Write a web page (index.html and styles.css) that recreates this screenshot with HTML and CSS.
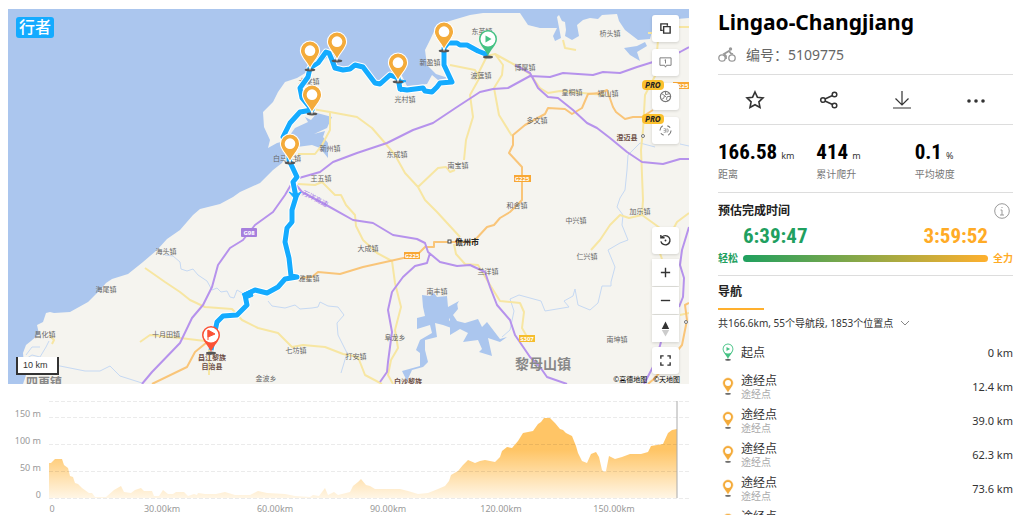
FILE: index.html
```
<!DOCTYPE html>
<html lang="zh-CN">
<head>
  <meta charset="UTF-8">
  <meta name="viewport" content="width=device-width, initial-scale=1">
  <title>Lingao-Changjiang - 行者</title>
  <link rel="stylesheet" href="styles.css">
</head>
<body>

  <!-- 公用图标 -->
  <svg class="defs" width="0" height="0" aria-hidden="true">
    <symbol id="pin" viewBox="0 0 20 30">
      <ellipse cx="10" cy="28" rx="5" ry="1.5" fill="#555"/>
      <path d="M10 27 C8 21 1 16 1 10 A9 9 0 0 1 19 10 C19 16 12 21 10 27Z" fill="#f4ab3a" stroke="#fff" stroke-width="1"/>
      <circle cx="10" cy="10" r="5" fill="#fff"/>
    </symbol>
    <symbol id="pin-start" viewBox="0 0 20 30">
      <ellipse cx="10" cy="28" rx="5" ry="1.5" fill="#555"/>
      <path d="M10 27 C8 21 1 16 1 10 A9 9 0 0 1 19 10 C19 16 12 21 10 27Z" fill="#45c284"/>
      <circle cx="10" cy="10" r="7.5" fill="#fff"/>
      <path d="M7.5 6.5v7l6-3.500z" fill="#45c284"/>
    </symbol>
    <symbol id="pin-end" viewBox="0 0 20 30">
      <ellipse cx="10" cy="28" rx="5" ry="1.5" fill="#555"/>
      <path d="M10 27 C8 21 1 16 1 10 A9 9 0 0 1 19 10 C19 16 12 21 10 27Z" fill="#fb5236"/>
      <circle cx="10" cy="10" r="7.5" fill="#fff"/>
      <path d="M7 5v10M7 5l7 4-7 3z" fill="#fb5236" stroke="#fb5236"/>
    </symbol>
  </svg>

  <div class="page">
    <main class="left">
      <div class="map">
        <svg class="map-canvas" viewBox="8 9 681 375" role="img" aria-label="路线地图">
          <rect class="sea" x="8" y="9" width="681" height="375"/>
          <path class="land" d="M23 384 L26 375 24 365 23 353 26 345 31 341 39 334 37 325 43 322 46 313 50 312 54 313 70 312 88 302 100 290 106 283 112 279 128 274 143 262 157 250 167 239 180 230 193 215 200 209 220 204 233 197 240 192 260 183 273 170 282 163 286 156 281 142 277 143 268 148 270 140 264 127 263 112 273 102 278 92 285 82 297 78 307 72 318 65 328 57 337 62 333 66 347 68 362 65 373 83 382 82 388 73 400 72 407 86 427 84 432 75 438 80 448 78 436 74 427 65 425 50 430 40 437 25 453 20 470 15 483 13 520 13 528 25 540 28 557 28 553 36 555 41 561 38 557 17 559 15 562 21 565 22 566 30 565 36 572 40 579 36 577 25 583 20 590 18 598 19 602 15 617 14 619 21 625 30 638 40 650 39 653 27 664 20 689 18 V384Z"/>
          <!-- 海湾和水库 -->
          <path class="sea" d="M305 117 L311 120 317 113 332 117 327 128 314 134 325 131 323 137 328 143 328 158 320 148 312 145 297 147 283 146 290 135 295 128 308 122Z"/>
          <path class="sea" d="M624 48 L637 46 645 42 647 46 637 52 640 61 630 55Z"/>
          <path class="sea" d="M422 295 L430 296 434 293 437 297 447 296 448 307 459 301 452 313 449 320 457 330 443 325 435 323 437 337 425 340 425 350 428 362 423 367 412 370 407 381 402 371 420 366 420 353 416 350 420 340 432 333 430 325 417 329 417 318 425 316 423 307Z"/>
          <path class="sea" d="M450 313 L457 303 458 309 453 315 457 321 465 323 478 319 482 327 487 322 500 339 507 337 500 342 488 338 492 356 479 352 482 349 478 340 463 342 468 333 460 329 450 335Z"/>
          <path class="river" d="M24 360 l8 -5 8 2 6 -10 3 -6 M26 355 l6 -8 8 0 M165 255 L173 256 180 262 181 269 187 271 193 269 198 275 207 281 212 290 217 288 221 292 227 291 230 297 234 298 237 290 244 294 M268 301 L272 306 285 308 295 305 300 309 312 308 318 307 320 302 328 306 338 307 344 315 337 323 338 335 347 353 341 373 M55 365 L85 371 100 371 110 366 120 376 142 383 M689 146 L680 144 M655 147 L640 143 628 155 627 170 625 190 620 198 617 207 623 215 622 225 628 240 620 243 608 250 615 267 611 282 611 286 602 286 598 303 590 310 578 305 575 289 573 296 564 301 569 307 545 311 541 301 530 298 519 295 510 299 514 311 510 330 502 337"/>
          <!-- 道路 -->
          <path class="road yellow" d="M312 109 L330 112 357 117 372 128 385 143 395 155 405 173 418 187 425 200 437 212 460 237 M454 244 L456 254 465 264 478 265 490 285 500 301 520 303 524 312 522 328 530 342 M330 112 L330 130 322 145 315 154 298 154 M298 184 L315 185 322 182 335 195 341 195 346 205 355 215 356 226 363 240 377 253 392 261 395 283 401 307 395 330 398 348 391 360 388 375 393 384 M450 65 L475 70 480 77 470 95 473 117 466 140 464 160 M455 170 L450 172 446 167 438 168 418 187 M487 56 L495 54 503 65 502 75 494 88 499 115 512 136 M475 80 L487 56 M495 54 L515 65 530 74 540 88 548 93 560 91 605 95 M145 268 L165 282 180 292 190 300 205 307 232 309 242 320 258 328 278 333 292 347 303 345 325 347 343 354 358 357 365 375 382 384 M140 342 L150 335 180 338 205 341 M658 40 L655 76 645 95 643 130 641 150 643 200 642 215 629 218 620 215 610 225 600 240 591 250 M642 215 L660 228 657 245 662 259 M689 213 L677 222 670 235 M563 40 L565 48 576 50 M50 336 l4 4 -2 4 M209 345 v30 M680 315 l9 -2 M648 33 h12 l10 -6 h19"/>
          <path class="road orange" d="M653 110 L642 117 633 117 625 119 616 112 613 107 607 90 600 93 588 94 582 108 572 114 565 109 548 108 545 114 525 125 513 135 513 145 509 153 522 167 522 200 510 212 500 218 494 225 487 227 475 240 M475 242 H434 v5 H425 L417 255 390 261 363 267 340 274 318 272 312 277 298 278 M152 384 L187 367 195 352 206 343 M689 303 L685 305 687 320 682 345 655 378 648 384"/>
          <path class="road purple" d="M292 180 L320 172 333 162 357 153 387 143 413 130 433 123 457 107 480 92 493 89 508 88 530 76 550 77 563 73 593 75 603 72 620 73 637 67 653 62 680 52 689 47 M515 65 L530 73 538 88 548 97 558 98 573 110 587 123 597 128 610 138 627 152 642 162 663 164 680 159 689 159 M142 384 L152 372 180 343 192 318 203 305 212 287 218 265 230 248 243 240 255 225 273 212 285 195 292 183 M292 180 L302 192 328 206 353 220 373 223 393 235 417 239 425 243 428 252 440 262 457 266 470 265 485 272 490 287 497 305 510 320 515 335 530 357 540 367 547 377 567 384 M430 253 L427 263 415 266 403 277 392 292 388 310 392 332 388 362 387 372 380 382 M689 227 L682 250 680 265 684 278 683 297 679 307 M661 342 L655 363 644 384"/>

          <text class="town" x="482" y="34">东英镇</text>
          <text class="town" x="430" y="65">新盈镇</text>
          <text class="town" x="405" y="102">光村镇</text>
          <text class="town" x="481" y="78">波莲镇</text>
          <text class="town" x="525" y="70">博厚镇</text>
          <text class="town" x="610" y="36">桥头镇</text>
          <text class="town" x="572" y="95">皇桐镇</text>
          <text class="town" x="608" y="96">福山镇</text>
          <text class="town" x="537" y="123">多文镇</text>
          <text class="town" x="309" y="84">木棠镇</text>
          <text class="town" x="330" y="151">新州镇</text>
          <text class="town" x="287" y="161">白马井镇</text>
          <text class="town" x="321" y="181">王五镇</text>
          <text class="town" x="397" y="157">东成镇</text>
          <text class="town" x="458" y="168">南宝镇</text>
          <text class="town" x="517" y="208">和舍镇</text>
          <text class="town" x="576" y="223">中兴镇</text>
          <text class="town" x="640" y="214">加乐镇</text>
          <text class="town" x="587" y="259">仁兴镇</text>
          <text class="town" x="488" y="274">兰洋镇</text>
          <text class="town" x="437" y="294">南丰镇</text>
          <text class="town" x="617" y="342">南坤镇</text>
          <text class="town" x="368" y="251">大成镇</text>
          <text class="town" x="309" y="281">雅星镇</text>
          <text class="town" x="395" y="340">阜龙乡</text>
          <text class="town" x="296" y="353">七坊镇</text>
          <text class="town" x="356" y="359">打安镇</text>
          <text class="town" x="266" y="381">金波乡</text>
          <text class="town" x="166" y="254">海头镇</text>
          <text class="town" x="106" y="292">海尾镇</text>
          <text class="town" x="45" y="337">昌化镇</text>
          <text class="town" x="166" y="337">十月田镇</text>
          <text class="county" x="627" y="140">澄迈县</text>
          <text class="county" x="408" y="384">白沙黎族</text>
          <text class="county" x="212" y="360">昌江黎族</text>
          <text class="county" x="212" y="369">自治县</text>
          <text class="city" x="467" y="245">儋州市</text>
          <text class="big-town" x="543" y="369">黎母山镇</text>
          <text class="big-town small" x="44" y="387">四更镇</text>
          <text class="expressway" x="315" y="201" transform="rotate(27 315 199)">万洋高速</text>
          <rect x="448" y="240" width="3" height="3" fill="#fff" stroke="#444"/>
          <circle cx="643" cy="136" r="1.5" fill="#fff" stroke="#777"/>
          <circle cx="686" cy="322" r="1.5" fill="#fff" stroke="#777"/>

          <rect class="shield-purple" x="241" y="228" width="16" height="9" rx="1"/>
          <text class="shield" x="249" y="235">G98</text>
          <rect class="shield-orange" x="404" y="252" width="16" height="7"/>
          <text class="shield" x="412" y="258">G225</text>
          <rect class="shield-orange" x="514" y="175" width="17" height="7"/>
          <text class="shield" x="522" y="181">G225</text>
          <rect class="shield-orange" x="673" y="82" width="16" height="7"/>
          <text class="shield" x="681" y="88">G225</text>
          <rect class="shield-yellow" x="519" y="335" width="16" height="7"/>
          <text class="shield" x="527" y="341">S307</text>

          <!-- 骑行路线 -->
          <defs>
            <path id="track" d="M488 55 L478 51 467 45 460 45 457 43 448 43 444 48 444 65 452 82 440 83 437 87 432 92 425 91 423 88 407 90 400 89 398 78 390 75 380 84 375 83 363 67 355 65 350 69 343 70 335 68 332 60 329 53 326 52 318 63 310 68 308 77 300 88 302 98 312 110 300 112 290 123 283 137 289 155 289 160 297 177 293 182 296 197 292 210 292 222 287 228 285 242 289 258 291 276 297 277 285 279 278 287 267 293 255 290 245 295 247 305 237 315 223 316 217 322 211 350"/>
          </defs>
          <use href="#track" class="casing"/>
          <use href="#track" class="line"/>
          <path class="arrow" d="M289 192 l6 3 6 -3 -5 8z M242 294 l9 -4 2 6 -7 3z M396 79 l10 2 -6 3 1 8z"/>

          <use href="#pin" x="301" y="84" width="22" height="32"/>
          <use href="#pin" x="279" y="133" width="22" height="32"/>
          <use href="#pin" x="299" y="40" width="22" height="32"/>
          <use href="#pin" x="326" y="31" width="22" height="32"/>
          <use href="#pin" x="387" y="52" width="22" height="32"/>
          <use href="#pin" x="433" y="21" width="22" height="32"/>
          <use href="#pin-start" x="478" y="29" width="20" height="30"/>
          <use href="#pin-end" x="201" y="325" width="20" height="30"/>
        </svg>

        <a class="logo" href="#">行者</a>
        <div class="scale">10 km</div>
        <div class="copyright"><span>©高德地图</span><span>©天地图</span></div>

        <div class="tools tools-top">
          <button aria-label="图层"><svg viewBox="0 0 14 14"><path d="M4 9H2V2h7v2M5 5h7v7H5z" stroke="#333" stroke-width="1.5"/></svg></button>
          <button aria-label="路况"><svg viewBox="0 0 14 14"><path d="M1 2h12v8H8l-1 2-1-2H1zM6 4.500l1-.5v4" stroke="#777"/></svg></button>
          <button aria-label="全景"><span class="pro">PRO</span><svg viewBox="0 0 14 14"><circle cx="7" cy="7" r="5.5" stroke="#777" stroke-width="1.3"/><path d="M3 4l3 2-1 3-2 1M7 2v3l4-1M12 7H9l-1 3 2 2M6 6l2 2" stroke="#777"/></svg></button>
          <button aria-label="3D"><span class="pro">PRO</span><svg viewBox="0 0 14 14"><path d="M1 7a6 6 0 0 1 3-5M5 12a5 5 0 0 1-3-2M9 2a5 5 0 0 1 3 2M13 7a6 6 0 0 1-3 5" stroke="#777" stroke-width="1.2"/><path d="M5 5h2v4H5M5 7h2M8.500 5v4l1.500-1V6z" stroke="#999" stroke-width=".8"/></svg></button>
        </div>
        <div class="tools tools-bottom">
          <button aria-label="复位"><svg viewBox="0 0 14 14"><path d="M3 3.500A5 5 0 1 1 2 8M2 1v3h4" stroke="#333" stroke-width="1.5"/><circle cx="7" cy="7" r="1" fill="#333"/></svg></button>
          <div class="zoom">
            <button aria-label="放大"><svg viewBox="0 0 14 14"><path d="M2 7h10M7 2v10" stroke="#333" stroke-width="1.5"/></svg></button>
            <button aria-label="缩小"><svg viewBox="0 0 14 14"><path d="M2 7h10" stroke="#333" stroke-width="1.5"/></svg></button>
            <button aria-label="指北"><svg viewBox="0 0 14 18"><path d="M7 1l4 8H3z" fill="#333"/><path d="M7 17l4-7H3z" fill="#ccc"/></svg></button>
          </div>
          <button aria-label="全屏"><svg viewBox="0 0 14 14"><path d="M2 5V2h3M9 2h3v3M12 9v3H9M5 12H2V9" stroke="#333" stroke-width="1.5"/></svg></button>
        </div>
      </div>

      <!-- 海拔图 -->
      <svg class="chart" viewBox="8 395 681 120" role="img" aria-label="海拔图">
        <defs>
          <linearGradient id="fill" gradientUnits="userSpaceOnUse" x1="0" y1="418" x2="0" y2="498">
            <stop offset="0" stop-color="#ffc566"/>
            <stop offset="0.4" stop-color="#ffc566"/>
            <stop offset="1" stop-color="#fff6e6"/>
          </linearGradient>
        </defs>
        <path class="profile" fill="url(#fill)" d="M49 498 V463 L51 463 55 459 62 459 64 465 68 468 70 476 73 477 75 483 78 484 82 488 89 493 92 493 95 497 106 497 114 490 121 486 124 492 131 493 135 490 141 488 144 491 152 491 154 496 159 496 163 490 168 494 173 494 176 492 184 492 188 496 194 494 197 495 198 493 205 494 216 494 225 492 235 495 250 495 258 491 267 493 285 494 295 496 310 497 313 495 319 496 325 488 328 495 334 492 338 495 350 492 353 486 358 482 361 479 366 485 370 486 375 489 400 489 408 491 418 494 428 493 438 489 445 486 449 481 451 475 458 471 463 465 468 460 475 463 480 461 485 460 495 462 500 457 502 451 507 447 512 448 518 441 523 433 533 431 538 424 541 422 544 418 550 418 555 423 560 429 563 430 566 433 572 436 576 446 578 453 582 461 587 463 591 454 596 452 599 457 602 470 604 472 606 471 609 456 615 459 622 457 630 454 641 454 648 452 651 446 663 444 668 433 672 430 677 429 V498Z"/>
        <path class="grid" d="M49 401.500H689M49 417.500H689M49 444.500H689M49 471.500H689M49 498.500H689"/>
        <path class="cursor" d="M677 401V498"/>
        <g class="y-axis">
          <text x="41" y="417">150 m</text>
          <text x="41" y="444">100 m</text>
          <text x="41" y="471">50 m</text>
          <text x="41" y="498">0</text>
        </g>
        <g class="x-axis">
          <text x="52" y="512">0</text>
          <text x="162" y="512">30.00km</text>
          <text x="275" y="512">60.00km</text>
          <text x="388" y="512">90.00km</text>
          <text x="501" y="512">120.00km</text>
          <text x="614" y="512">150.00km</text>
        </g>
      </svg>
    </main>

    <aside class="panel">
      <header class="head">
        <h1>Lingao-Changjiang</h1>
        <p class="number">
          <svg viewBox="0 0 18 16" aria-hidden="true"><g fill="none" stroke="#999" stroke-width="1.3"><circle cx="4" cy="11" r="3.2"/><circle cx="14" cy="11" r="3.2"/><path d="M8 12V9L6 7l5-3 2 2.500 2 .5" stroke-width="1.8"/></g><circle cx="12.5" cy="2" r="1.7" fill="#999"/></svg>
          <span>编号：5109775</span>
        </p>
      </header>

      <div class="actions">
        <button aria-label="收藏"><svg viewBox="0 0 20 20"><path d="M10 2l2.400 5.200 5.600.7-4.100 3.900 1.100 5.700-5-2.800-5 2.800 1.100-5.700L2 7.900l5.600-.7z" stroke-width="1.6"/></svg></button>
        <button aria-label="分享"><svg viewBox="0 0 20 20"><g stroke-width="1.5"><circle cx="4" cy="10" r="2.3"/><circle cx="15.5" cy="4.5" r="2.3"/><circle cx="15.5" cy="15.5" r="2.3"/><path d="M6 9l7.500-3.500M6 11l7.500 3.500"/></g></svg></button>
        <button aria-label="下载"><svg viewBox="0 0 20 20"><path d="M10 1v14M3.500 8.500L10 15l6.500-6.500M1 18h18" stroke-width="1.2"/></svg></button>
        <button aria-label="更多"><svg viewBox="0 0 20 20"><g fill="#333" stroke="none"><circle cx="3" cy="11" r="1.8"/><circle cx="10" cy="11" r="1.8"/><circle cx="17" cy="11" r="1.8"/></g></svg></button>
      </div>

      <div class="stats">
        <div><p class="value"><b>166.58</b>km</p><p class="label">距离</p></div>
        <div><p class="value"><b>414</b>m</p><p class="label">累计爬升</p></div>
        <div><p class="value"><b>0.1</b>%</p><p class="label">平均坡度</p></div>
      </div>

      <section class="estimate">
        <div class="estimate-head">
          <h2>预估完成时间</h2>
          <button aria-label="说明"><svg viewBox="0 0 16 16"><circle cx="8" cy="8" r="7.3"/><path d="M6.500 7H8v5M6 12h4M8 4v1"/></svg></button>
        </div>
        <div class="times"><b class="easy">6:39:47</b><b class="hard">3:59:52</b></div>
        <div class="effort"><span class="easy">轻松</span><div class="bar"></div><span class="hard">全力</span></div>
      </section>

      <section class="nav">
        <h2>导航</h2>
        <button class="summary">共166.6km, 55个导航段, 1853个位置点
          <svg viewBox="0 0 10 10"><path d="M1 3l4 4 4-4"/></svg>
        </button>
        <ul class="points">
          <li><svg><use href="#pin-start"/></svg><div><p>起点</p></div><span>0 km</span></li>
          <li><svg><use href="#pin"/></svg><div><p>途经点</p><small>途经点</small></div><span>12.4 km</span></li>
          <li><svg><use href="#pin"/></svg><div><p>途经点</p><small>途经点</small></div><span>39.0 km</span></li>
          <li><svg><use href="#pin"/></svg><div><p>途经点</p><small>途经点</small></div><span>62.3 km</span></li>
          <li><svg><use href="#pin"/></svg><div><p>途经点</p><small>途经点</small></div><span>73.6 km</span></li>
          <li><svg><use href="#pin"/></svg><div><p>途经点</p><small>途经点</small></div></li>
        </ul>
      </section>
    </aside>
  </div>

</body>
</html>
```
FILE: styles.css
```
* {
  box-sizing: border-box;
}

body {
  margin: 0;
  background-color: #fff;
  color: #333;
  font-family: 'Noto Sans', 'Noto Sans CJK SC', sans-serif;
  font-size: 12px;
}

h1, h2, p, ul {
  margin: 0;
  padding: 0;
}

button {
  border: none;
  background: none;
  padding: 0;
  font-family: inherit;
  color: inherit;
  cursor: pointer;
}

svg {
  display: block;
}

.defs {
  position: absolute;
}

.page {
  display: flex;
  gap: 29px;
  height: 100vh;
  padding: 9px 11px 0 8px;
  overflow: hidden;
}

.left {
  flex: 681;
  min-width: 0;
}

.panel {
  flex: 295;
  min-width: 0;
}

/* 地图 */
.map {
  position: relative;
  margin-bottom: 11px;
}

.map-canvas,
.chart {
  width: 100%;
  height: auto;
}

.sea {
  fill: #abc6ee;
}

.land {
  fill: #f5f4ef;
}

.river {
  fill: none;
  stroke: #c6d9f3;
}

.road {
  fill: none;
  stroke-width: 2;
  stroke-linejoin: round;
}

.yellow {
  stroke: #f7e6a2;
}

.orange {
  stroke: #f9c579;
}

.purple {
  stroke: #b692ec;
}

.map-canvas text {
  text-anchor: middle;
}

.town {
  font-size: 7px;
  fill: #666;
}

.county {
  font-size: 7px;
  font-weight: bold;
  fill: #6e5047;
}

.city {
  font-size: 8px;
  font-weight: bold;
  fill: #222;
}

.big-town {
  font-size: 14px;
  font-weight: bold;
  fill: #888;
}

.big-town.small {
  font-size: 12px;
}

.expressway {
  font-size: 7px;
  fill: #a77de8;
}

.shield {
  font-size: 6px;
  font-weight: bold;
  fill: #fff;
}

.shield-purple {
  fill: #a67fdd;
}

.shield-orange {
  fill: #f8a734;
}

.shield-yellow {
  fill: #f5bd2e;
}

.casing,
.line {
  fill: none;
  stroke-linejoin: round;
}

.casing {
  stroke: #fff;
  stroke-width: 7;
}

.line {
  stroke: #14abff;
  stroke-width: 5;
}

.arrow {
  fill: #14abff;
  stroke: #14abff;
}

.logo {
  position: absolute;
  top: 8px;
  left: 8px;
  padding: 0 3px;
  border-radius: 3px;
  background-color: #14abff;
  color: #fff;
  font-size: 16px;
  font-weight: 500;
  line-height: 21px;
  text-decoration: none;
}

.scale {
  position: absolute;
  left: 8px;
  bottom: 9px;
  width: 43px;
  padding-left: 5px;
  border: 2px solid #333;
  border-top: none;
  background-color: #fff;
  font-family: 'Liberation Sans', sans-serif;
  font-size: 9px;
  line-height: 16px;
}

.copyright {
  position: absolute;
  right: 9px;
  bottom: 0;
  display: flex;
  gap: 6px;
  font-size: 7px;
  line-height: 9px;
  color: #000;
}

.tools {
  position: absolute;
  right: 10px;
  display: flex;
  flex-direction: column;
}

.tools-top {
  top: 6px;
  gap: 7px;
}

.tools-bottom {
  bottom: 10px;
  gap: 5px;
}

.tools button {
  position: relative;
  display: flex;
  justify-content: center;
  align-items: center;
  width: 27px;
  height: 27px;
  border-radius: 3px;
  background-color: #fff;
  box-shadow: 0 1px 3px rgba(0, 0, 0, 0.15);
}

.tools svg {
  width: 13px;
  height: 13px;
  fill: none;
}

.zoom {
  display: flex;
  flex-direction: column;
  gap: 1px;
}

.zoom button {
  border-radius: 0;
}

.zoom button:last-child svg {
  height: 18px;
}

.pro {
  position: absolute;
  top: -3px;
  left: -10px;
  padding: 0 3px;
  border-radius: 4px;
  background-color: #fbc02d;
  color: #222;
  font-size: 8px;
  font-style: italic;
  font-weight: bold;
  line-height: 10px;
}

/* 海拔图 */
.grid {
  stroke: rgba(0, 0, 0, 0.08);
  stroke-dasharray: 4 2;
}

.cursor {
  stroke: #aaa;
}

.y-axis,
.x-axis {
  font-size: 9px;
  fill: #999;
}

.y-axis {
  text-anchor: end;
}

.x-axis {
  text-anchor: middle;
}

/* 路书信息 */
.head {
  height: 66px;
  border-bottom: 1px solid #ddd;
}

h1 {
  color: #000;
  font-size: 21px;
  line-height: 26px;
}

h2 {
  color: #222;
  font-size: 12px;
  line-height: 16px;
}

.number {
  display: flex;
  align-items: center;
  gap: 10px;
  margin-top: 10px;
  color: #666;
  font-size: 14px;
  line-height: 20px;
}

.number svg {
  width: 18px;
  height: 16px;
}

.actions {
  display: grid;
  grid-template-columns: repeat(4, 1fr);
  height: 50px;
  border-bottom: 1px solid #ddd;
}

.actions button {
  display: flex;
  justify-content: center;
  align-items: center;
}

.actions svg {
  width: 20px;
  height: 20px;
  fill: none;
  stroke: #333;
}

.stats {
  display: grid;
  grid-template-columns: repeat(3, 1fr);
  height: 68px;
  padding-top: 14px;
  border-bottom: 1px solid #ddd;
}

.value {
  display: flex;
  align-items: baseline;
  gap: 4px;
  height: 27px;
  font-size: 9px;
  line-height: 26px;
}

.value b,
.times {
  font-family: 'Liberation Sans Narrow', 'Roboto Condensed', 'Roboto', sans-serif;
  font-size: 21px;
}

.value b {
  color: #000;
}

.label {
  color: #777;
  font-size: 10px;
  line-height: 16px;
}

.estimate {
  height: 83px;
  padding-top: 10px;
  border-bottom: 1px solid #ddd;
}

.estimate-head {
  display: flex;
  justify-content: space-between;
  align-items: center;
  padding-right: 3px;
}

.estimate-head svg {
  width: 16px;
  height: 16px;
  fill: none;
  stroke: #999;
}

.times {
  display: flex;
  justify-content: space-between;
  padding: 0 25px;
  line-height: 34px;
}

.effort {
  display: flex;
  align-items: center;
  gap: 5px;
  font-size: 10px;
  font-weight: bold;
  line-height: 10px;
}

.bar {
  flex: 1;
  height: 7px;
  border-radius: 4px;
  background: linear-gradient(to right, #1fa05f, #ffb02e);
}

.easy {
  color: #1fa05f;
}

.hard {
  color: #ffab26;
}

.nav {
  padding-top: 8px;
}

.nav h2 {
  width: 46px;
  padding-bottom: 8px;
  border-bottom: 2px solid #ffb02e;
}

.summary {
  display: flex;
  align-items: center;
  gap: 7px;
  height: 25px;
  font-size: 10px;
}

.summary svg {
  width: 10px;
  height: 10px;
  fill: none;
  stroke: #888;
}

.points {
  list-style: none;
}

.points li {
  display: flex;
  align-items: center;
  gap: 7px;
  height: 34px;
}

.points svg {
  width: 12px;
  height: 18px;
  margin-left: 4px;
}

.points div {
  flex: 1;
  padding-top: 2px;
}

.points p {
  font-size: 12px;
  line-height: 14px;
}

.points small {
  display: block;
  color: #aaa;
  font-size: 10px;
  line-height: 12px;
}

.points span {
  font-size: 11px;
}
```
